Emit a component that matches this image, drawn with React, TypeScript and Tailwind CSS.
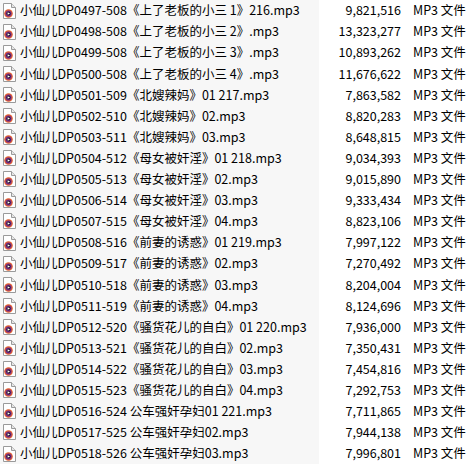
const files = [
  ["小仙儿DP0497-508《上了老板的小三 1》216.mp3", "9,821,516"],
  ["小仙儿DP0498-508《上了老板的小三 2》.mp3", "13,323,277"],
  ["小仙儿DP0499-508《上了老板的小三 3》.mp3", "10,893,262"],
  ["小仙儿DP0500-508《上了老板的小三 4》.mp3", "11,676,622"],
  ["小仙儿DP0501-509《北嫂辣妈》01 217.mp3", "7,863,582"],
  ["小仙儿DP0502-510《北嫂辣妈》02.mp3", "8,820,283"],
  ["小仙儿DP0503-511《北嫂辣妈》03.mp3", "8,648,815"],
  ["小仙儿DP0504-512《母女被奸淫》01 218.mp3", "9,034,393"],
  ["小仙儿DP0505-513《母女被奸淫》02.mp3", "9,015,890"],
  ["小仙儿DP0506-514《母女被奸淫》03.mp3", "9,333,434"],
  ["小仙儿DP0507-515《母女被奸淫》04.mp3", "8,823,106"],
  ["小仙儿DP0508-516《前妻的诱惑》01 219.mp3", "7,997,122"],
  ["小仙儿DP0509-517《前妻的诱惑》02.mp3", "7,270,492"],
  ["小仙儿DP0510-518《前妻的诱惑》03.mp3", "8,204,004"],
  ["小仙儿DP0511-519《前妻的诱惑》04.mp3", "8,124,696"],
  ["小仙儿DP0512-520《骚货花儿的自白》01 220.mp3", "7,936,000"],
  ["小仙儿DP0513-521《骚货花儿的自白》02.mp3", "7,350,431"],
  ["小仙儿DP0514-522《骚货花儿的自白》03.mp3", "7,454,816"],
  ["小仙儿DP0515-523《骚货花儿的自白》04.mp3", "7,292,753"],
  ["小仙儿DP0516-524 公车强奸孕妇01 221.mp3", "7,711,865"],
  ["小仙儿DP0517-525 公车强奸孕妇02.mp3", "7,944,138"],
  ["小仙儿DP0518-526 公车强奸孕妇03.mp3", "7,996,801"],
];

const Mp3Icon = () => (
  <svg width="13" height="16" viewBox="0 0 13 16" className="shrink-0">
    <path d="M0.5 0.5 H8.5 L12.5 4.5 V15.5 H0.5 Z" fill="#fff" stroke="#9a9a9a" />
    <path d="M8.5 0.5 V4.5 H12.5" fill="#e6e6e6" stroke="#9a9a9a" />
    <circle cx="5.5" cy="10.5" r="4.3" fill="#e2602e" />
    <circle cx="5.5" cy="10.5" r="3.1" fill="#7b2f8e" />
    <circle cx="5.5" cy="10.5" r="2.1" fill="#2a1530" />
    <path d="M4.6 9.2 L7 10.5 L4.6 11.8 Z" fill="#fff" />
  </svg>
);

export default function App() {
  return (
    <div
      className="w-[476px] h-[466px] overflow-hidden bg-white text-[12.5px] text-black"
      style={{ fontFamily: '"Noto Sans CJK SC", "Noto Sans", sans-serif' }}
    >
      {files.map(([name, size]) => (
        <div key={name} className="flex h-[21.1px] items-center">
          <div className="flex h-full w-[319px] items-center gap-[4px] bg-[#f7f7f7] pl-[3px]">
            <Mp3Icon />
            <span className="whitespace-nowrap leading-none">{name}</span>
          </div>
          <div className="w-[82px] text-right leading-none">{size}</div>
          <div className="ml-[12px] whitespace-nowrap leading-none">MP3 文件</div>
        </div>
      ))}
    </div>
  );
}
